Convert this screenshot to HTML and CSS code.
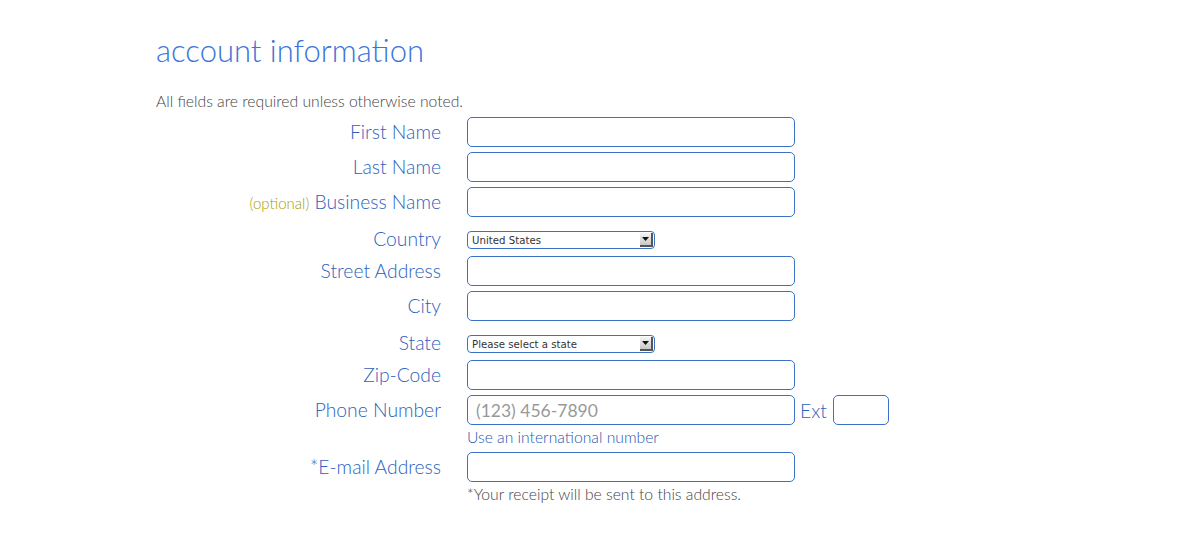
FILE: index.html
```html
<!DOCTYPE html>
<html>
<head>
<meta charset="utf-8">
<link rel="stylesheet" href="styles.css">
</head>
<body>
<div class="page">
  <h1 class="title">account information</h1>
  <p class="note">All fields are required unless otherwise noted.</p>
  <form class="form">
    <label class="lbl">First Name</label>
    <div class="field"><input class="inp" type="text"></div>

    <label class="lbl">Last Name</label>
    <div class="field"><input class="inp" type="text"></div>

    <label class="lbl"><span class="opt">(optional)</span> Business Name</label>
    <div class="field"><input class="inp" type="text"></div>

    <label class="lbl sel-row">Country</label>
    <div class="field sel-row"><div class="select"><span class="sel-text">United States</span><span class="sel-btn"><svg width="7" height="4" viewBox="0 0 7 4"><path d="M0 0h7L3.5 4z" fill="#111"/></svg></span></div></div>

    <label class="lbl">Street Address</label>
    <div class="field"><input class="inp" type="text"></div>

    <label class="lbl">City</label>
    <div class="field"><input class="inp" type="text"></div>

    <label class="lbl sel-row">State</label>
    <div class="field sel-row"><div class="select"><span class="sel-text">Please select a state</span><span class="sel-btn"><svg width="7" height="4" viewBox="0 0 7 4"><path d="M0 0h7L3.5 4z" fill="#111"/></svg></span></div></div>

    <label class="lbl">Zip-Code</label>
    <div class="field"><input class="inp" type="text"></div>

    <label class="lbl">Phone Number</label>
    <div class="field">
      <div class="phone-line">
        <input class="inp" type="text" placeholder="(123) 456-7890">
        <span class="ext-lbl">Ext</span>
        <input class="inp ext" type="text">
      </div>
      <a class="intl">Use an international number</a>
    </div>

    <label class="lbl">*E-mail Address</label>
    <div class="field">
      <input class="inp" type="text">
      <p class="hint">*Your receipt will be sent to this address.</p>
    </div>
  </form>
</div>
</body>
</html>
```
FILE: styles.css
```css
html, body {
  margin: 0;
  padding: 0;
  background: #fff;
}
.page {
  padding: 30px 0 0 156px;
  font-family: Lato, "Open Sans", sans-serif;
}
.title {
  margin: 0;
  font-weight: 300;
  font-size: 31px;
  line-height: 40px;
  color: #3a74da;
}
.note {
  margin: 22px 0 0;
  font-size: 15.7px;
  font-weight: 300;
  line-height: 18px;
  color: #444;
}
.form {
  display: grid;
  grid-template-columns: 285px auto;
  column-gap: 26px;
  margin-top: 7px;
  width: 760px;
}
.lbl {
  text-align: right;
  font-size: 19.3px;
  font-weight: 300;
  line-height: 30px;
  height: 30px;
  margin-bottom: 5px;
  color: #2c62bd;
  white-space: nowrap;
}
.opt {
  font-size: 15px;
  color: #a89c00;
}
.field {
  margin-bottom: 5px;
}
.inp {
  display: block;
  box-sizing: border-box;
  width: 328px;
  height: 30px;
  margin: 0;
  padding: 0 8px;
  border: 1px solid #3a73c6;
  border-radius: 5px;
  font-family: Lato, "Open Sans", sans-serif;
  font-size: 17.5px;
  color: #333;
  background: #fff;
}
.inp::placeholder {
  color: #999;
}
.lbl.sel-row {
  height: 34px;
  line-height: 34px;
  margin-bottom: 0;
}
.field.sel-row {
  height: 34px;
  margin-bottom: 0;
  padding-top: 9px;
  box-sizing: border-box;
}
.select {
  box-sizing: border-box;
  width: 188px;
  height: 18px;
  border: 1px solid #3a73c6;
  border-radius: 4px;
  display: flex;
  align-items: center;
  overflow: hidden;
  background: #fff;
}
.sel-text {
  flex: 1;
  padding-left: 4px;
  font-family: "DejaVu Sans", Verdana, sans-serif;
  font-size: 10.2px;
  color: #333;
}
.sel-btn {
  width: 13px;
  height: 14px;
  margin-right: 1px;
  display: flex;
  align-items: center;
  justify-content: center;
  background: linear-gradient(#f4f4f4, #c8c8c8);
  border-right: 2px solid #555;
  border-bottom: 2px solid #555;
  box-sizing: border-box;
}
.phone-line {
  display: flex;
  align-items: center;
}
.ext-lbl {
  font-size: 19.3px;
  font-weight: 300;
  color: #2c62bd;
  margin: 0 6px 0 5px;
}
.inp.ext {
  width: 56px;
}
.intl {
  display: block;
  font-size: 15.7px;
  font-weight: 300;
  line-height: 18px;
  margin-top: 3px;
  height: 19px;
  color: #1f58b4;
}
.hint {
  margin: 3px 0 0;
  font-size: 15.7px;
  font-weight: 300;
  line-height: 18px;
  color: #444;
}
```
